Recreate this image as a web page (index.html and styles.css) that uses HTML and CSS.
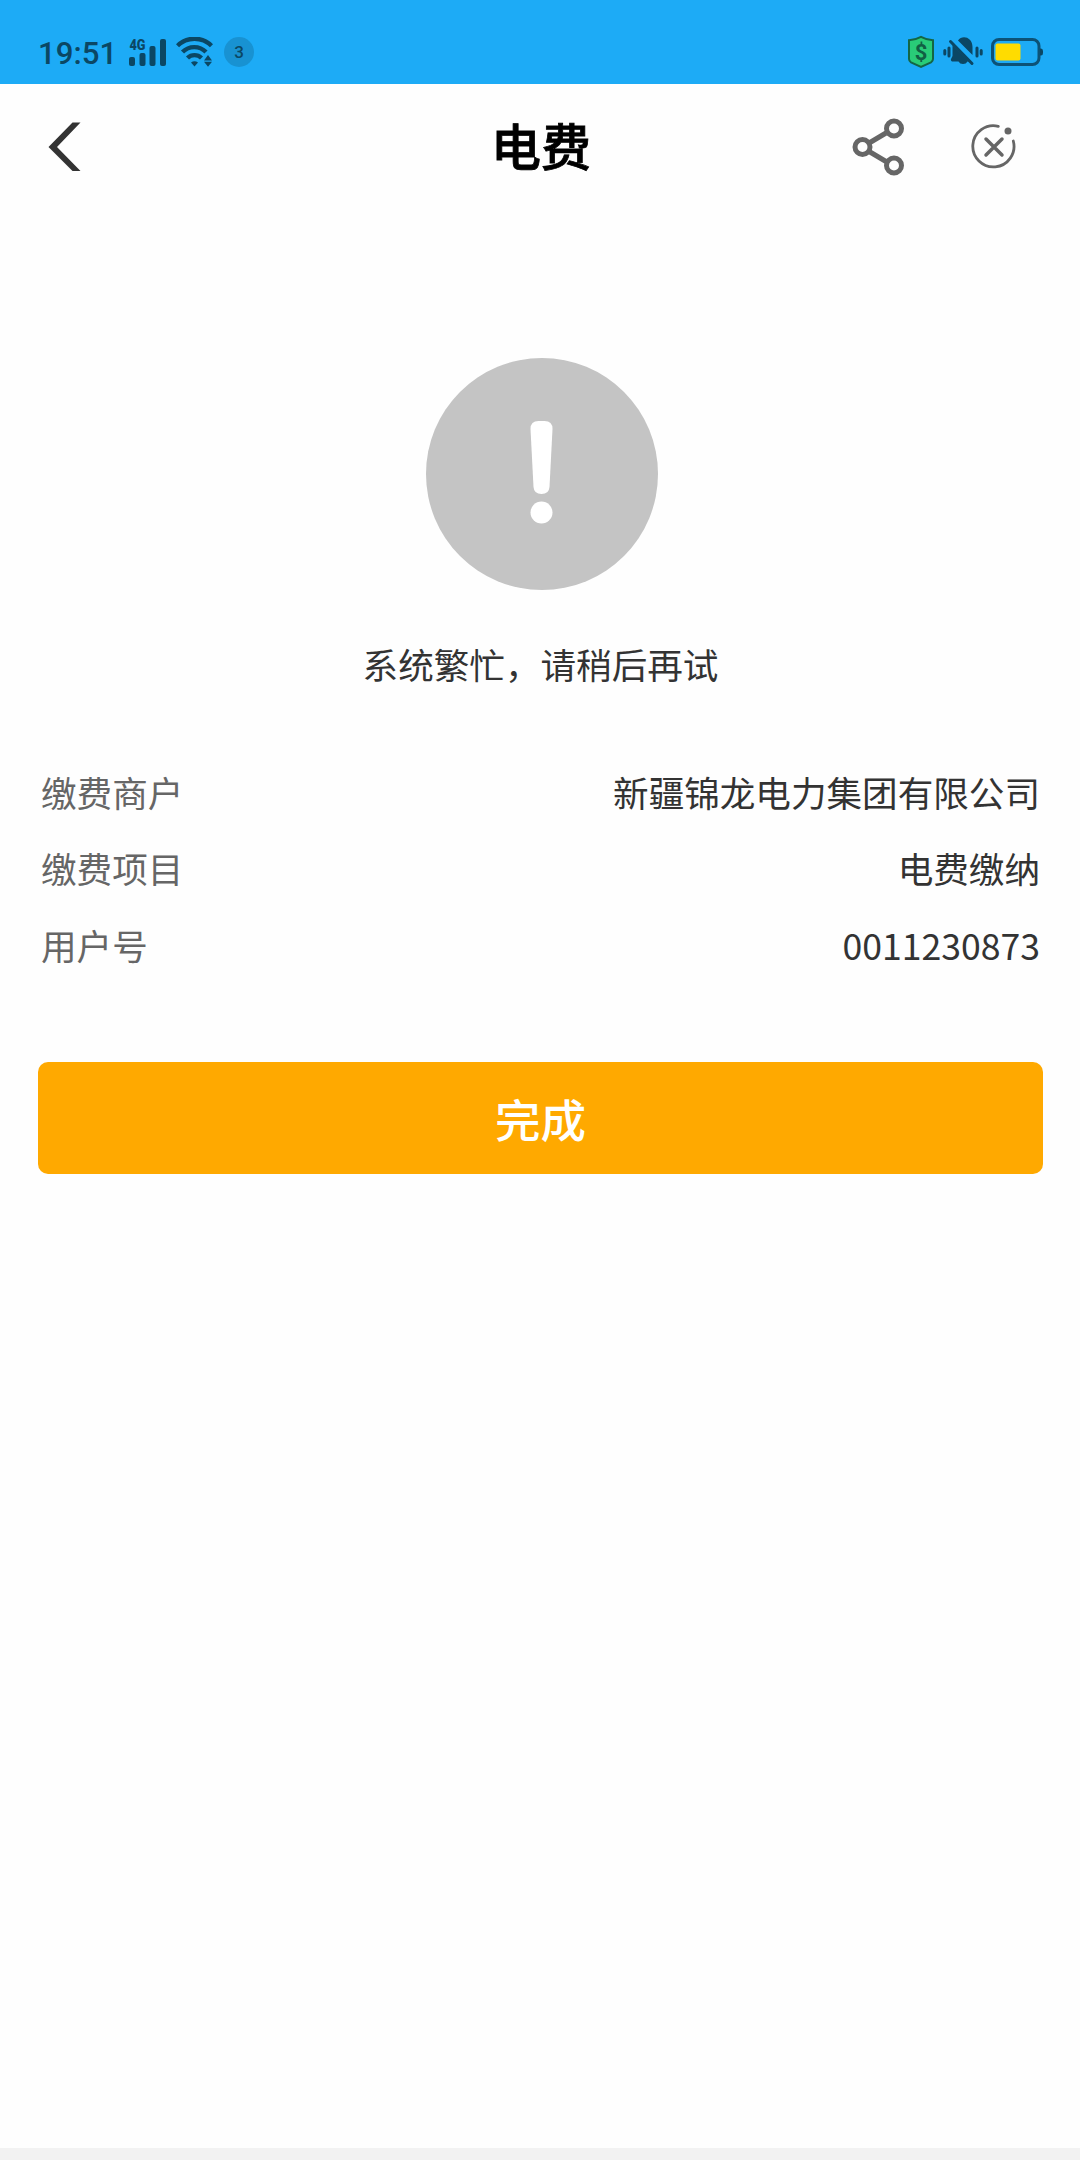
FILE: index.html
```html
<!DOCTYPE html>
<html lang="zh-CN">
<head>
  <meta charset="UTF-8">
  <title>电费</title>
  <link rel="stylesheet" href="styles.css">
</head>
<body>

<!-- Status bar -->
<div class="status-bar">
  <span class="time">19:51</span>
  <svg class="signal" width="38" height="32" viewBox="0 -3 38 32">
    <text x="0.5" y="11" textLength="16" lengthAdjust="spacingAndGlyphs">4G</text>
    <rect x="0" y="18" width="6" height="9" rx="2"/>
    <rect x="10.5" y="14" width="6" height="13" rx="2"/>
    <rect x="20.5" y="7" width="6" height="20" rx="2"/>
    <rect x="31" y="0" width="6" height="27" rx="2"/>
  </svg>
  <svg class="wifi" width="37" height="30" viewBox="0 0 37 30">
    <g fill="none" stroke="#0b4764" stroke-width="4.4">
      <path d="M1.5 8.8a24 24 0 0 1 34 0"/>
      <path d="M6.5 15a16.5 16.5 0 0 1 23.5 0"/>
      <path d="M11.5 21a10 10 0 0 1 14 0"/>
    </g>
    <path d="M15 25.5q3.5-2.4 7 0l-3.5 4zM28 23.5l4-5.500 4 5.500zM28 24.8l4 5 4-5z"/>
  </svg>
  <span class="count">3</span>

  <div class="status-right">
    <svg class="shield" width="28" height="34" viewBox="0 0 28 34">
      <path d="M14 1.8q6 3.2 12 3.5V24q0 2-2 3.3L14 32 4 27.3Q2 26 2 24V5.3Q8 5 14 1.8z"/>
      <text x="14" y="24.5" text-anchor="middle">$</text>
    </svg>
    <svg class="bell" width="40" height="32" viewBox="0 0 40 32">
      <path d="M15 4.5C19-1.5 29.5 1 29.5 11v8zM9.5 9L26 25.5h-1.5a5 4.5 0 0 1-9 0H9q-2-1.2-.5-3.5l1-2z"/>
      <path class="line" d="M7.5 5.5L29 27.5M6 12v8M34 12v8M1.8 14.5V18M38.2 14.5V18"/>
    </svg>
    <svg class="battery" width="53" height="28" viewBox="0 0 53 28">
      <rect class="case" x="1.5" y="1.5" width="46.5" height="25" rx="6.5"/>
      <path d="M49 10.5h1q2 0 2 2.5v2q0 2.5-2 2.5h-1z"/>
      <rect class="level" x="4.5" y="5.5" width="25" height="17" rx="2"/>
    </svg>
  </div>
</div>

<!-- Title bar -->
<div class="header">
  <svg class="back" width="34" height="50" viewBox="0 0 34 50">
    <path d="M24.5 0.5h8L9 25l23.5 24h-8L0.5 25z"/>
  </svg>
  <h1>电费</h1>
  <div class="actions">
    <svg class="share" width="54" height="58" viewBox="0 0 54 58">
      <path d="M18 24.5L34 15M18 34l16 9.5"/>
      <circle cx="10.5" cy="29" r="7.5"/>
      <circle cx="42" cy="10.5" r="7.5"/>
      <circle cx="42" cy="47.5" r="7.5"/>
    </svg>
    <svg class="close" width="46" height="46" viewBox="0 0 46 46">
      <path d="M27.3 2.3A20.6 20.6 0 1 0 42.3 17"/>
      <path class="cross" d="M15 15l16 16M31 15L15 31"/>
      <circle cx="37" cy="7" r="3.5"/>
    </svg>
  </div>
</div>

<!-- Result -->
<div class="result">
  <svg width="232" height="232" viewBox="0 0 232 232">
    <circle cx="116" cy="116" r="116" fill="#c4c4c4"/>
    <path d="M104.5 71q0-8 8-8h6q8 0 8 8l-3 58q-.5 7-8 7t-8-7z" fill="#fff"/>
    <circle cx="115.500" cy="154.5" r="11" fill="#fff"/>
  </svg>
  <p>系统繁忙，请稍后再试</p>
</div>

<div class="details">
  <div class="row"><span class="label">缴费商户</span><span>新疆锦龙电力集团有限公司</span></div>
  <div class="row"><span class="label">缴费项目</span><span>电费缴纳</span></div>
  <div class="row"><span class="label">用户号</span><span>0011230873</span></div>
</div>

<button class="done">完成</button>

<div class="bottom"></div>

</body>
</html>
```
FILE: styles.css
```css
* {
  box-sizing: border-box;
}

body {
  margin: 0;
  height: 2160px;
  display: flex;
  flex-direction: column;
  background: #fefefe;
  color: #333;
  font-family: "Noto Sans CJK SC", sans-serif;
  font-size: 35.6px;
}

svg {
  display: block;
  flex: none;
}

.status-bar {
  height: 84px;
  padding: 20px 36px 0 38px;
  display: flex;
  align-items: center;
  background: #1dabf6;
  color: #0b4764;
  fill: #0b4764;
  font-family: Roboto, sans-serif;
}

.time {
  width: 91px;
  padding-top: 3px;
  font-size: 31.2px;
  font-weight: 500;
  line-height: 36px;
}

.signal text {
  font-size: 14px;
  font-weight: 900;
}

.wifi {
  margin-left: 9px;
}

.count {
  width: 30px;
  height: 30px;
  margin-left: 11px;
  border-radius: 50%;
  background: #1892d2;
  font-size: 17px;
  font-weight: 500;
  line-height: 31px;
  text-align: center;
}

.status-right {
  margin-left: auto;
  display: flex;
  align-items: center;
  gap: 8px;
}

.shield path {
  fill: #29cc78;
  stroke: #146644;
  stroke-width: 2;
}

.shield text {
  fill: #116044;
  font-size: 22px;
  font-weight: 700;
}

.bell .line {
  fill: none;
  stroke: #0b4764;
  stroke-width: 3;
  stroke-linecap: round;
}

.battery .case {
  fill: none;
  stroke: #0c5277;
  stroke-width: 3;
}

.battery .level {
  fill: #ffdc00;
}

.header {
  position: relative;
  height: 126px;
  padding: 0 63px 1px 48px;
  display: flex;
  align-items: center;
  justify-content: space-between;
}

.back {
  fill: #333;
}

.header h1 {
  position: absolute;
  top: 24px;
  left: 2px;
  right: 0;
  margin: 0;
  color: #000;
  font-size: 50px;
  font-weight: 500;
  line-height: 72px;
  text-align: center;
  -webkit-text-stroke: 0.8px #000;
}

.actions {
  display: flex;
  align-items: center;
  gap: 65px;
  fill: none;
  stroke: #666;
}

.share {
  stroke-width: 5;
}

.close {
  stroke-width: 2.8;
  stroke-linecap: round;
}

.close .cross {
  stroke-width: 3.5;
}

.close circle {
  fill: #666;
  stroke: none;
}

.result {
  padding: 148px 0 0 3px;
  display: flex;
  flex-direction: column;
  align-items: center;
}

.result p {
  margin: 48px 2px 0 0;
  line-height: 52px;
}

.details {
  padding: 64px 40px 0 41px;
}

.row {
  height: 76.4px;
  display: flex;
  justify-content: space-between;
  line-height: 76px;
}

.label {
  color: #666;
}

.done {
  height: 112px;
  margin: 79px 37px 0 38px;
  padding: 0;
  border: 0;
  border-radius: 10px;
  background: #ffa900;
  color: #fff;
  font-family: inherit;
  font-size: 45.5px;
  font-weight: 500;
}

.bottom {
  height: 12px;
  margin-top: auto;
  background: #f2f2f2;
}
```
